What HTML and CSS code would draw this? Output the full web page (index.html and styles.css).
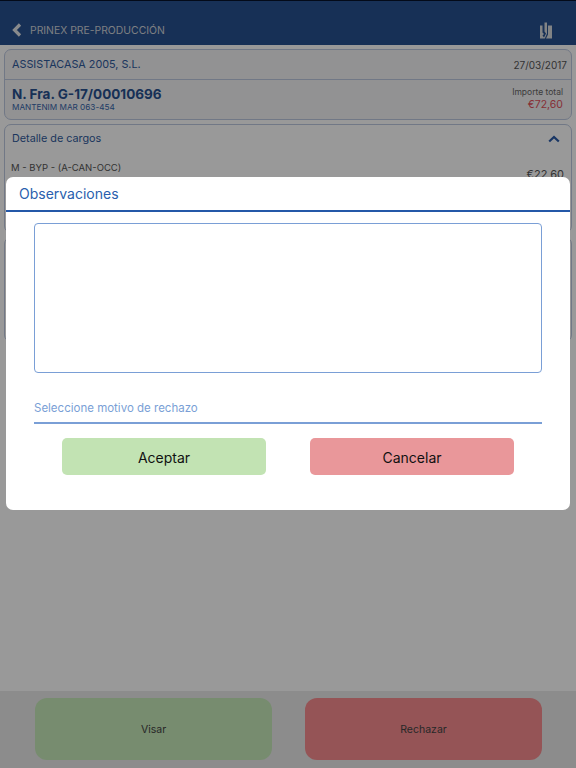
FILE: index.html
```html
<!DOCTYPE html>
<html>
<head>
  <meta charset="UTF-8">
  <title>Prinex</title>
  <link rel="stylesheet" href="styles.css">
</head>
<body>
  <div class="app">
    <header class="topbar">
      <div class="back">
        <svg class="back-icon" width="10" height="14" viewBox="0 0 10 14"><path d="M8 1.5 2.5 7 8 12.5" fill="none" stroke="#e4e6ea" stroke-width="3.2"/></svg>
        <span>PRINEX PRE-PRODUCCIÓN</span>
      </div>
      <svg class="logo" width="12" height="17" viewBox="0 0 12 17"><path d="M0 3.5h2.5v7L4 12 2.5 13.5 4 15.5 6 11.5 4.5 9.5V0.5h2.5V11.5L4.8 16.5H0zM8 3.5h4V16.5H6L8 12.5z" fill="#d8dade"/></svg>
    </header>

    <main class="content">
      <section class="card">
        <div class="card-head">
          <span>ASSISTACASA 2005, S.L.</span>
          <span class="date">27/03/2017</span>
        </div>
        <div class="invoice">
          <div>
            <div class="invoice-no">N. Fra. G-17/00010696</div>
            <div class="invoice-sub">MANTENIM MAR 063-454</div>
          </div>
          <div class="total">
            <div class="total-label">Importe total</div>
            <div class="total-value">€72,60</div>
          </div>
        </div>
      </section>

      <section class="card detail">
        <div class="detail-head">
          <span>Detalle de cargos</span>
          <svg width="12" height="8" viewBox="0 0 12 8"><path d="M1.2 6.5 6 2l4.8 4.5" fill="none" stroke="#2a5ba8" stroke-width="2.2"/></svg>
        </div>
        <div class="detail-row">
          <div>M - BYP - (A-CAN-OCC)</div>
          <div class="detail-amount">€22,60</div>
        </div>
      </section>

      <section class="card empty"></section>
    </main>

    <footer class="actions">
      <button class="action action-ok">Visar</button>
      <button class="action action-ko">Rechazar</button>
    </footer>
  </div>

  <div class="overlay">
    <div class="modal">
      <h2 class="modal-title">Observaciones</h2>
      <div class="modal-body">
        <textarea class="notes"></textarea>
        <div class="reason">Seleccione motivo de rechazo</div>
        <div class="modal-buttons">
          <button class="modal-btn btn-accept">Aceptar</button>
          <button class="modal-btn btn-cancel">Cancelar</button>
        </div>
      </div>
    </div>
  </div>
</body>
</html>
```

FILE: styles.css
```css
html, body {
  margin: 0;
  height: 100%;
}
body {
  font-family: Inter, "Liberation Sans", sans-serif;
  position: relative;
  width: 576px;
  height: 768px;
  overflow: hidden;
  background-color: #fff;
}
.app {
  display: flex;
  flex-direction: column;
  height: 768px;
}
.topbar {
  box-sizing: border-box;
  height: 45px;
  border-top: 1px solid #05122b;
  background-color: #27508f;
  display: flex;
  align-items: flex-end;
  justify-content: space-between;
  padding: 0 24px 6px 12px;
  flex-shrink: 0;
}
.back {
  display: flex;
  align-items: center;
  gap: 8px;
  height: 18px;
  color: #d0d4da;
  font-size: 10.4px;
}
.content {
  flex: 1;
  padding: 4px 4px 0;
  display: flex;
  flex-direction: column;
  gap: 4px;
}
.card {
  border: 1px solid #bcc8e0;
  border-radius: 7px;
  background-color: #f3f3f5;
}
.card-head {
  height: 29px;
  display: flex;
  align-items: center;
  justify-content: space-between;
  padding: 0 4px 0 7px;
  font-size: 10.8px;
  color: #2f5a9c;
  border-bottom: 1px solid #bcc8e0;
}
.date {
  color: #555;
  font-size: 10px;
}
.invoice {
  box-sizing: border-box;
  height: 39px;
  display: flex;
  align-items: center;
  justify-content: space-between;
  padding: 0 8px 2px 7px;
}
.invoice-no {
  font-size: 13.5px;
  font-weight: 700;
  color: #27508f;
}
.invoice-sub {
  font-size: 8.2px;
  color: #3766ab;
}
.total {
  text-align: right;
}
.total-label {
  font-size: 8.5px;
  color: #666;
}
.total-value {
  font-size: 10.5px;
  color: #e2505a;
  margin-top: 1px;
}
.detail {
  height: 107px;
  background-color: #fff;
}
.detail-head {
  height: 27px;
  display: flex;
  align-items: center;
  justify-content: space-between;
  padding: 0 11px 0 7px;
  font-size: 10.8px;
  color: #2f5a9c;
}
.detail-row {
  display: flex;
  justify-content: space-between;
  padding: 10px 7px 0 6px;
  font-size: 9.5px;
  color: #555;
}
.detail-amount {
  font-size: 11px;
  padding-top: 5px;
}
.empty {
  height: 103px;
  background-color: #fff;
}
.actions {
  height: 77px;
  flex-shrink: 0;
  background-color: #e9e9e9;
  box-sizing: border-box;
  padding: 7px 34px 8px 35px;
  display: flex;
  justify-content: space-between;
}
.action {
  width: 237px;
  border: none;
  border-radius: 12px;
  font-family: inherit;
  font-size: 10.5px;
  color: #444;
}
.action-ok {
  background-color: #c6e9b9;
}
.action-ko {
  background-color: #f98d90;
}
.overlay {
  position: absolute;
  inset: 0;
  background-color: rgba(0, 0, 0, 0.4);
  display: flex;
  justify-content: center;
  align-items: flex-start;
  padding-top: 177px;
}
.modal {
  width: 564px;
  height: 333px;
  background-color: #fff;
  border-radius: 7px;
}
.modal-title {
  margin: 0;
  box-sizing: border-box;
  height: 35px;
  padding-left: 13px;
  line-height: 33px;
  font-size: 14px;
  font-weight: 400;
  color: #2a5fae;
  border-bottom: 2px solid #2458a8;
}
.modal-body {
  padding: 11px 28px 0;
}
.notes {
  display: block;
  box-sizing: border-box;
  width: 100%;
  height: 150px;
  margin: 0;
  border: 1.5px solid #7a9fd6;
  border-radius: 4px;
  resize: none;
}
.reason {
  margin-top: 28px;
  height: 23px;
  box-sizing: border-box;
  border-bottom: 2px solid #7a9fd6;
  font-size: 11.5px;
  color: #7a9fd6;
}
.modal-buttons {
  display: flex;
  justify-content: space-between;
  padding: 14px 28px 0;
}
.modal-btn {
  width: 204px;
  height: 37px;
  padding: 1px 0 0;
  border: none;
  border-radius: 5px;
  font-family: inherit;
  font-size: 14px;
  color: #111;
}
.btn-accept {
  background-color: #c2e3b3;
}
.btn-cancel {
  background-color: #e9979a;
}
```
